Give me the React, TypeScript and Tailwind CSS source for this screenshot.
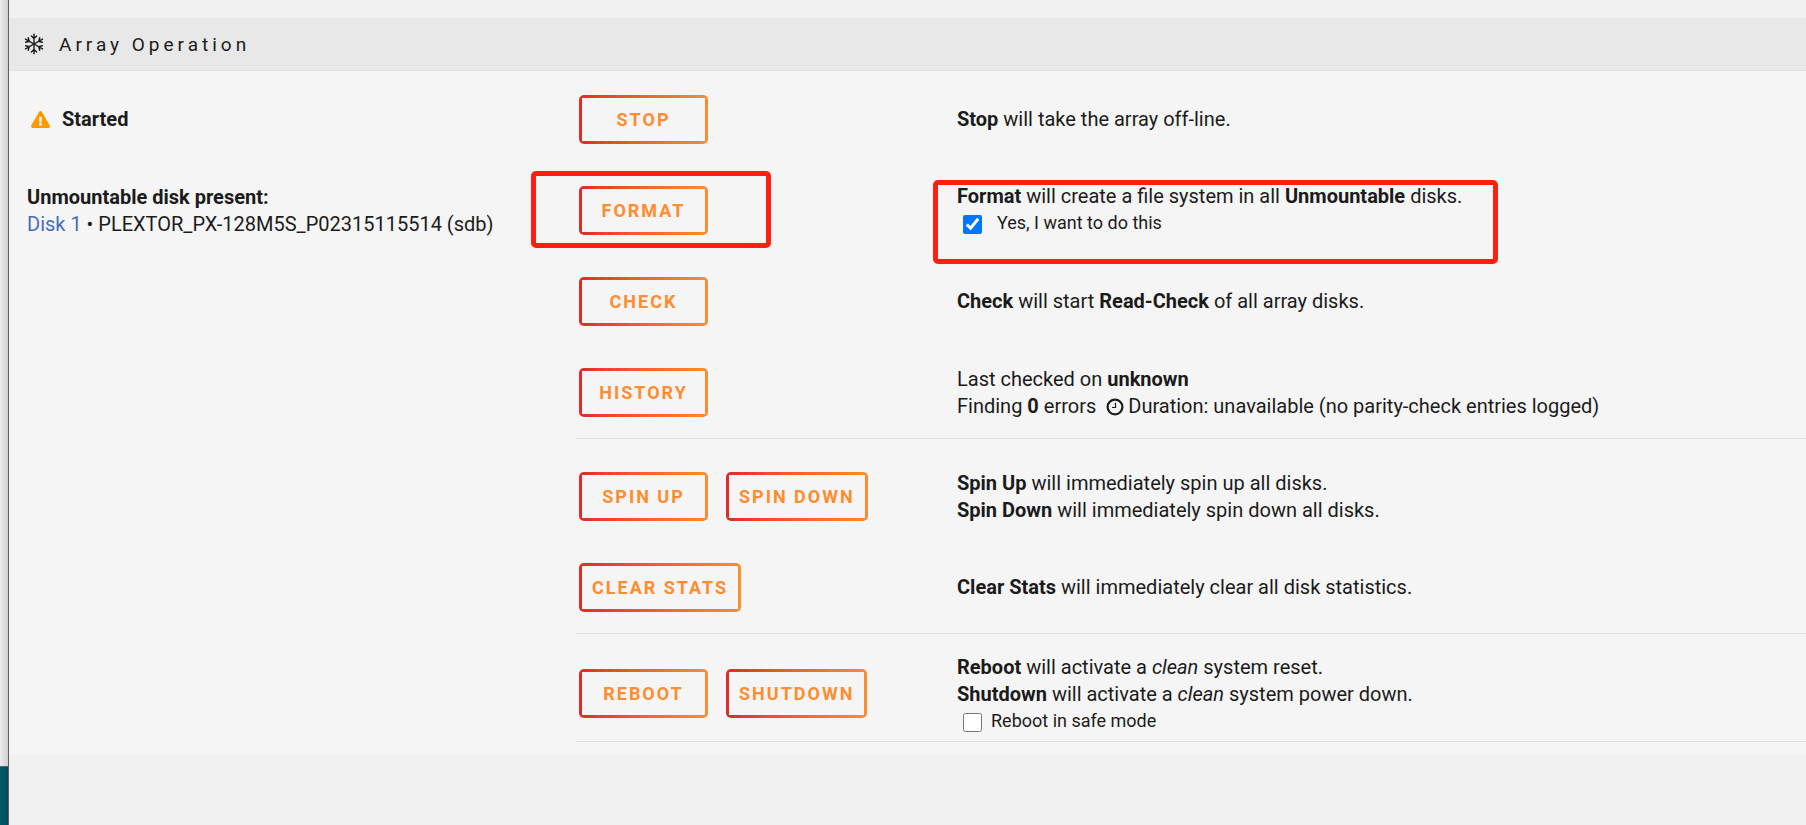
import React from "react";
import type { ReactNode } from "react";
import { FaExclamationTriangle } from "react-icons/fa";

function SnowflakeIcon() {
  return (
    <svg viewBox="0 0 20 22" className="h-[22px] w-5 shrink-0" fill="none" stroke="#1c1b1b" strokeWidth="1.4" strokeLinecap="round" strokeLinejoin="round" aria-hidden="true">
      {[0, 60, 120, 180, 240, 300].map((angle) => (
        <path key={angle} d="M10 11V1.2M7.4 2.9L10 5.5L12.6 2.9" transform={`rotate(${angle} 10 11)`} />
      ))}
    </svg>
  );
}

function ClockIcon() {
  return (
    <svg viewBox="0 0 18 18" className="mr-1 ml-2.5 inline-block size-[18px] align-[-3px]" fill="none" stroke="#1c1b1b" aria-hidden="true">
      <circle cx="9" cy="9" r="7.4" strokeWidth="2.2" />
      <path d="M9.5 4.8V9.5H6" strokeWidth="1.2" />
    </svg>
  );
}

function GradientButton({ children }: { children: ReactNode }) {
  return (
    <button type="button" className="flex h-[49px] min-w-[129px] rounded-[5px] bg-linear-to-r from-[#e22828] to-[#ff8c2f] p-[3px]">
      <span className="flex h-full w-full items-center justify-center bg-[#f5f5f5] px-[10px] text-[18px] font-bold tracking-[2px] whitespace-nowrap text-[#ff8c2f] uppercase">
        {children}
      </span>
    </button>
  );
}

function Row({ status, actions, children, className = "h-[91px]" }: { status?: ReactNode; actions: ReactNode; children: ReactNode; className?: string }) {
  return (
    <div className={`grid grid-cols-[549fr_381fr_849fr] items-center ${className}`}>
      <div>{status}</div>
      <div className="relative flex gap-[18px] pl-[3px]">{actions}</div>
      <div>{children}</div>
    </div>
  );
}

function Divider() {
  return (
    <div className="grid grid-cols-[549fr_1230fr]">
      <hr className="col-start-2 border-[#e0e0e0]" />
    </div>
  );
}

export default function App() {
  return (
    <div className="flex min-h-screen bg-[#f1f1f1] font-['Roboto',sans-serif] text-[20px] leading-[27px] text-[#1c1b1b]">
      <div className="flex w-[9px] shrink-0 flex-col border-r border-[#606060]">
        <div className="grow border-b border-[#4a6a74] bg-linear-to-r from-[#ebebeb] to-[#cfcfcf]" />
        <div className="h-[58px] bg-linear-to-r from-[#005a6e] to-[#004a5c]" />
      </div>

      <main className="min-w-0 grow pt-[18px]">
        <h1 className="flex h-[53px] items-center gap-[15px] border-b border-[#e0e0e0] bg-[#e8e8e8] pl-[15px] text-[19px] tracking-[4px]">
          <SnowflakeIcon />
          Array Operation
        </h1>

        <div className="bg-[#f5f5f5] pt-[3px] pb-3 pl-[18px]">
          <Row
            status={
              <div className="flex items-center gap-3 pl-1 font-bold">
                <FaExclamationTriangle className="size-[19px] text-[#ff9900]" aria-hidden="true" />
                Started
              </div>
            }
            actions={<GradientButton>Stop</GradientButton>}
          >
            <b>Stop</b> will take the array off-line.
          </Row>

          <Row
            status={
              <>
                <p className="font-bold">Unmountable disk present:</p>
                <p>
                  <a href="#disk1" className="text-[#486dba]">Disk 1</a> • PLEXTOR_PX-128M5S_P02315115514 (sdb)
                </p>
              </>
            }
            actions={
              <>
                <GradientButton>Format</GradientButton>
                <div className="pointer-events-none absolute -top-[15px] -left-[45px] h-[77px] w-[240px] rounded-[5px] border-[5px] border-[#ff1f10]" />
              </>
            }
          >
            <div className="relative pb-[3px]">
              <div className="pointer-events-none absolute -top-[3px] -left-6 h-[84px] w-[565px] rounded-[5px] border-[5px] border-[#ff1f10]" />
              <p>
                <b>Format</b> will create a file system in all <b>Unmountable</b> disks.
              </p>
              <label className="-mt-px flex items-center gap-[15px] pl-1.5 text-[18px]">
                <input type="checkbox" defaultChecked className="mt-1 size-[19px]" />
                Yes, I want to do this
              </label>
            </div>
          </Row>

          <Row actions={<GradientButton>Check</GradientButton>}>
            <b>Check</b> will start <b>Read-Check</b> of all array disks.
          </Row>

          <Row actions={<GradientButton>History</GradientButton>}>
            <p>
              Last checked on <b>unknown</b>
            </p>
            <p>
              Finding <b>0</b> errors
              <ClockIcon />
              Duration: unavailable (no parity-check entries logged)
            </p>
          </Row>

          <Divider />

          <Row
            className="mt-3 h-[91px]"
            actions={
              <>
                <GradientButton>Spin Up</GradientButton>
                <GradientButton>Spin Down</GradientButton>
              </>
            }
          >
            <p>
              <b>Spin Up</b> will immediately spin up all disks.
            </p>
            <p>
              <b>Spin Down</b> will immediately spin down all disks.
            </p>
          </Row>

          <Row actions={<GradientButton>Clear Stats</GradientButton>}>
            <b>Clear Stats</b> will immediately clear all disk statistics.
          </Row>

          <Divider />

          <Row
            className="mt-3 h-[95px]"
            actions={
              <>
                <GradientButton>Reboot</GradientButton>
                <GradientButton>Shutdown</GradientButton>
              </>
            }
          >
            <p>
              <b>Reboot</b> will activate a <em>clean</em> system reset.
            </p>
            <p>
              <b>Shutdown</b> will activate a <em>clean</em> system power down.
            </p>
            <label className="-mt-px flex items-center gap-[9px] pl-1.5 text-[18px]">
              <input type="checkbox" className="mt-1 size-[19px]" />
              Reboot in safe mode
            </label>
          </Row>

          <Divider />
        </div>
      </main>
    </div>
  );
}
